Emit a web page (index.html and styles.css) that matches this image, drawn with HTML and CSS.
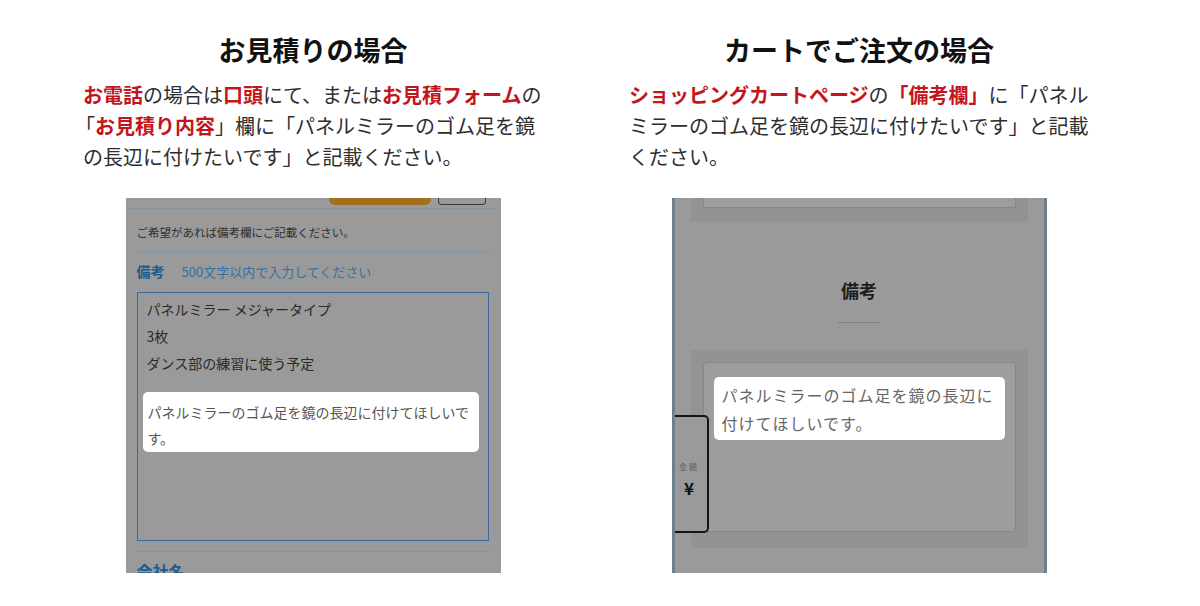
FILE: index.html
```html
<!DOCTYPE html>
<html lang="ja">
<head>
    <meta charset="UTF-8">
    <meta name="viewport" content="width=device-width, initial-scale=1.0">
    <title>備考欄の記入方法</title>
    <link rel="stylesheet" href="styles.css">
</head>
<body>
<main class="guide">
    <section class="case">
        <h2 class="case-title">お見積りの場合</h2>
        <p class="case-text"><strong>お電話</strong>の場合は<strong>口頭</strong>にて、または<strong>お見積フォーム</strong>の<br><span class="open">「</span><strong>お見積り内容</strong>」欄に「パネルミラーのゴム足を鏡<br>の長辺に付けたいです」と記載ください。</p>

        <div class="shot shot-form">
            <div class="form-top">
                <span class="btn-order"></span>
                <span class="btn-back"></span>
            </div>
            <div class="form-body">
                <p class="form-note">ご希望があれば備考欄にご記載ください。</p>
                <div class="form-label">
                    <strong>備考</strong>
                    <span class="form-hint">500文字以内で入力してください</span>
                </div>
                <div class="form-area">
                    <div class="area-line">パネルミラー メジャータイプ</div>
                    <div class="area-line">3枚</div>
                    <div class="area-line">ダンス部の練習に使う予定</div>
                    <div class="area-mark">パネルミラーのゴム足を鏡の長辺に付けてほしいで<br>す。</div>
                </div>
                <div class="form-sep"></div>
                <div class="form-label company"><strong>会社名</strong></div>
            </div>
        </div>
    </section>

    <section class="case">
        <h2 class="case-title">カートでご注文の場合</h2>
        <p class="case-text"><strong>ショッピングカートページ</strong>の<strong>「備考欄」</strong>に「パネル<br>ミラーのゴム足を鏡の長辺に付けたいです」と記載<br>ください。</p>

        <div class="shot shot-cart">
            <div class="cart-panel">
                <div class="cart-box top"></div>
            </div>
            <h3 class="cart-heading">備考</h3>
            <div class="cart-rule"></div>
            <div class="cart-panel memo">
                <div class="cart-box">
                    <div class="cart-mark">パネルミラーのゴム足を鏡の長辺に<br>付けてほしいです。</div>
                </div>
            </div>
            <div class="cart-total">
                <span class="total-label">金額</span>
                <span class="total-yen">¥</span>
            </div>
        </div>
    </section>
</main>
</body>
</html>
```

FILE: styles.css
```css
body {
    margin: 0;
    background-color: #fff;
    font-family: "Noto Sans CJK JP", "Noto Sans", sans-serif;
    color: #333;
}
.guide {
    display: grid;
    grid-template-columns: 460px 460px;
    column-gap: 86px;
    padding: 31px 0 0 83px;
}
.case-title {
    margin: 0;
    font-size: 27px;
    line-height: 38px;
    font-weight: 700;
    color: #111;
    text-align: center;
}
.case-text {
    margin: 10px 0 0;
    font-size: 20px;
    line-height: 31px;
    color: #2e2e2e;
    white-space: nowrap;
}
.case-text strong {
    color: #c3161c;
    font-weight: 700;
}
.case-text .open {
    margin-left: -8px;
}

/* screenshots */
.shot {
    width: 375px;
    height: 375px;
    margin: 26px auto 0;
    background-color: #9a9a9a;
    overflow: hidden;
    box-sizing: border-box;
}

/* estimate form */
.form-top {
    height: 10px;
    border-bottom: 1px solid #8796a2;
    display: flex;
    justify-content: flex-end;
    align-items: flex-start;
    gap: 7px;
    padding-right: 15px;
}
.btn-order {
    width: 102px;
    height: 7px;
    background-color: #a26f1e;
    border-radius: 0 0 6px 6px;
}
.btn-back {
    width: 46px;
    height: 6px;
    border: 1px solid #3e3e3e;
    border-top: 0;
    border-radius: 0 0 4px 4px;
}
.form-body {
    padding: 0 12px 0 11px;
}
.form-note {
    margin: 13px 0 0;
    padding-bottom: 10px;
    font-size: 11.5px;
    line-height: 20px;
    color: #2f2f2f;
    border-bottom: 1px dotted #7b8f9d;
}
.form-label {
    margin-top: 8px;
    display: flex;
    align-items: baseline;
    gap: 17px;
    line-height: 20px;
}
.form-label strong {
    font-size: 14px;
    font-weight: 700;
    color: #1d5a8c;
}
.form-hint {
    font-size: 13px;
    color: #3471a3;
}
.form-area {
    margin-top: 10px;
    height: 249px;
    box-sizing: border-box;
    border: 1px solid #3b6aa0;
    padding: 3px 9px 0 5px;
    font-size: 14px;
    color: #2a2a2a;
}
.area-line {
    padding-left: 4px;
    line-height: 27px;
}
.area-mark {
    margin-top: 15px;
    padding: 7px 5px 1px;
    background-color: #fff;
    border-radius: 5px;
    line-height: 26px;
    color: #555;
    white-space: nowrap;
}
.form-sep {
    margin-top: 10px;
    border-top: 1px dotted #7b8f9d;
}
.form-label.company strong {
    font-size: 16px;
    line-height: 22px;
}

/* cart page */
.shot-cart {
    position: relative;
    border-left: 3px solid #6c808f;
    border-right: 3px solid #6c808f;
    padding: 0 16px;
}
.cart-panel {
    background-color: #939393;
    padding: 0 12px 14px;
}
.cart-box {
    box-sizing: border-box;
    border: 1px solid #868686;
    background-color: #9d9d9d;
    border-radius: 4px;
}
.cart-box.top {
    height: 10px;
    border-top: 0;
    border-radius: 0 0 3px 3px;
}
.cart-heading {
    margin: 55px 0 0;
    text-align: center;
    font-size: 18px;
    line-height: 26px;
    font-weight: 700;
    color: #1e1e1e;
}
.cart-rule {
    width: 42px;
    height: 1px;
    margin: 19px auto 0;
    background-color: #818181;
}
.cart-panel.memo {
    margin-top: 27px;
    padding: 12px 12px 16px;
}
.cart-panel.memo .cart-box {
    height: 170px;
    padding: 14px 10px;
}
.cart-mark {
    padding: 4px 8px 3px;
    background-color: #fff;
    border-radius: 5px;
    font-size: 16px;
    line-height: 28px;
    letter-spacing: 1px;
    color: #666;
    white-space: nowrap;
}
.cart-total {
    position: absolute;
    left: -3px;
    top: 217px;
    width: 37px;
    height: 118px;
    box-sizing: border-box;
    border: 2px solid #151515;
    border-left: 0;
    border-radius: 0 5px 5px 0;
    background-color: #9a9a9a;
    display: flex;
    flex-direction: column;
    align-items: center;
    gap: 5px;
    padding-top: 44px;
}
.total-label {
    font-size: 8px;
    line-height: 12px;
    letter-spacing: 2px;
    color: #5e5e5e;
}
.total-yen {
    font-size: 17px;
    line-height: 20px;
    font-weight: 700;
    color: #111;
}
```
